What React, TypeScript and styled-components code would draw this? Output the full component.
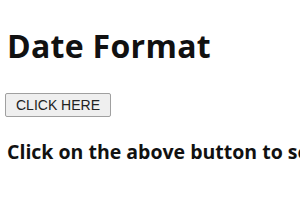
import React from 'react';
import styled, { createGlobalStyle } from 'styled-components';

const GlobalStyle = createGlobalStyle`
  body {
    margin: 0;
    background: #ffffff;
    font-family: 'Open Sans', 'Noto Sans', sans-serif;
    overflow: hidden;
  }
`;

const Page = styled.div`
  padding: 26px 7px 0;
  width: 300px;
  height: 210px;
  box-sizing: border-box;
  white-space: nowrap;
  overflow: hidden;
  color: #111;
`;

const Title = styled.h1`
  margin: 0;
  font-size: 32px;
  font-weight: 700;
  line-height: 40px;
  letter-spacing: 0.3px;
`;

const ClickButton = styled.button`
  display: block;
  margin: 27px 0 0 -2px;
  padding: 0 10px;
  width: 106px;
  height: 24px;
  font-family: 'Liberation Sans', Arial, sans-serif;
  font-size: 14px;
  color: #222;
  background: #efefef;
  border: 1px solid #a0a0a0;
  border-radius: 2px;
`;

const Message = styled.p`
  margin: 22px 0 0;
  font-size: 19.5px;
  font-weight: 700;
  line-height: 26px;
`;

export default function App() {
  return (
    <Page>
      <GlobalStyle />
      <Title>Date Format</Title>
      <ClickButton>CLICK HERE</ClickButton>
      <Message>Click on the above button to see the date</Message>
    </Page>
  );
}
